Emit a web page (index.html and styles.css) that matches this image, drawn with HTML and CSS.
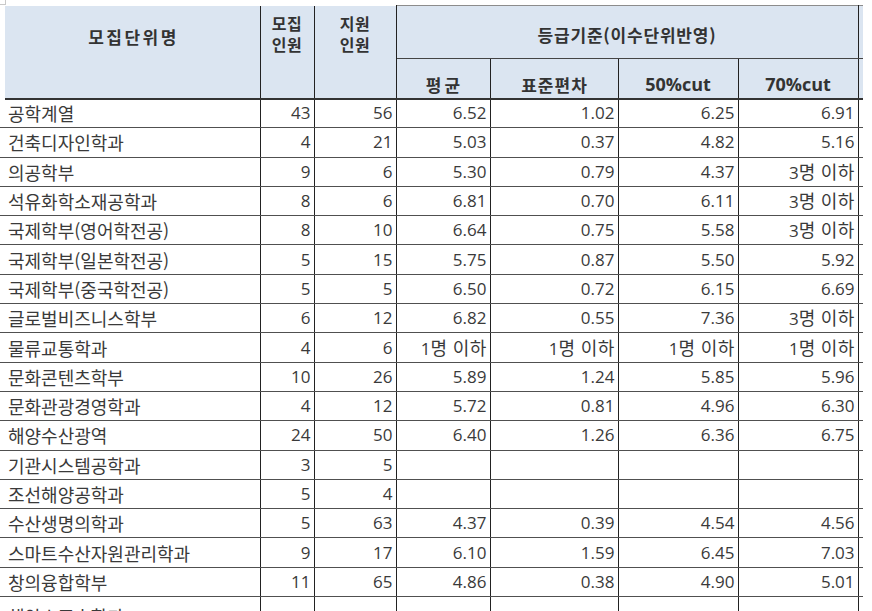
FILE: index.html
```html
<!DOCTYPE html>
<html lang="ko">
<head>
<meta charset="utf-8">
<title>등급기준</title>
<link rel="stylesheet" href="styles.css">
</head>
<body>
<div class="corner"></div>
<table class="grid">
  <colgroup>
    <col class="c-lead"><col class="c-name"><col class="c-quota"><col class="c-apply">
    <col class="c-avg"><col class="c-std"><col class="c-cut"><col class="c-cut"><col class="c-tail">
  </colgroup>
  <thead>
    <tr class="h1">
      <th class="lead" rowspan="2"></th>
      <th class="hname" rowspan="2">모집단위명</th>
      <th class="hsmall vr" rowspan="2"><span class="ln">모집</span><span class="ln">인원</span></th>
      <th class="hsmall vr" rowspan="2"><span class="ln">지원</span><span class="ln">인원</span></th>
      <th class="hgroup vr" colspan="4">등급기준(이수단위반영)</th>
      <th class="htail"></th>
    </tr>
    <tr class="h2">
      <th class="hsub wide vr">평균</th>
      <th class="hsub vr">표준편차</th>
      <th class="hsub lat vr">50%cut</th>
      <th class="hsub lat vr">70%cut</th>
      <th class="htail2"></th>
    </tr>
  </thead>
  <tbody>
    <tr><td class="lead"></td><td class="name vr">공학계열</td><td class="num vr">43</td><td class="num vr">56</td><td class="num vr">6.52</td><td class="num vr">1.02</td><td class="num vr">6.25</td><td class="num vr">6.91</td><td></td></tr>
    <tr><td class="lead"></td><td class="name vr">건축디자인학과</td><td class="num vr">4</td><td class="num vr">21</td><td class="num vr">5.03</td><td class="num vr">0.37</td><td class="num vr">4.82</td><td class="num vr">5.16</td><td></td></tr>
    <tr><td class="lead"></td><td class="name vr">의공학부</td><td class="num vr">9</td><td class="num vr">6</td><td class="num vr">5.30</td><td class="num vr">0.79</td><td class="num vr">4.37</td><td class="num vr">3<span class="ko">명 이하</span></td><td></td></tr>
    <tr><td class="lead"></td><td class="name vr">석유화학소재공학과</td><td class="num vr">8</td><td class="num vr">6</td><td class="num vr">6.81</td><td class="num vr">0.70</td><td class="num vr">6.11</td><td class="num vr">3<span class="ko">명 이하</span></td><td></td></tr>
    <tr><td class="lead"></td><td class="name vr">국제학부(영어학전공)</td><td class="num vr">8</td><td class="num vr">10</td><td class="num vr">6.64</td><td class="num vr">0.75</td><td class="num vr">5.58</td><td class="num vr">3<span class="ko">명 이하</span></td><td></td></tr>
    <tr><td class="lead"></td><td class="name vr">국제학부(일본학전공)</td><td class="num vr">5</td><td class="num vr">15</td><td class="num vr">5.75</td><td class="num vr">0.87</td><td class="num vr">5.50</td><td class="num vr">5.92</td><td></td></tr>
    <tr><td class="lead"></td><td class="name vr">국제학부(중국학전공)</td><td class="num vr">5</td><td class="num vr">5</td><td class="num vr">6.50</td><td class="num vr">0.72</td><td class="num vr">6.15</td><td class="num vr">6.69</td><td></td></tr>
    <tr><td class="lead"></td><td class="name vr">글로벌비즈니스학부</td><td class="num vr">6</td><td class="num vr">12</td><td class="num vr">6.82</td><td class="num vr">0.55</td><td class="num vr">7.36</td><td class="num vr">3<span class="ko">명 이하</span></td><td></td></tr>
    <tr><td class="lead"></td><td class="name vr">물류교통학과</td><td class="num vr">4</td><td class="num vr">6</td><td class="num vr">1<span class="ko">명 이하</span></td><td class="num vr">1<span class="ko">명 이하</span></td><td class="num vr">1<span class="ko">명 이하</span></td><td class="num vr">1<span class="ko">명 이하</span></td><td></td></tr>
    <tr><td class="lead"></td><td class="name vr">문화콘텐츠학부</td><td class="num vr">10</td><td class="num vr">26</td><td class="num vr">5.89</td><td class="num vr">1.24</td><td class="num vr">5.85</td><td class="num vr">5.96</td><td></td></tr>
    <tr><td class="lead"></td><td class="name vr">문화관광경영학과</td><td class="num vr">4</td><td class="num vr">12</td><td class="num vr">5.72</td><td class="num vr">0.81</td><td class="num vr">4.96</td><td class="num vr">6.30</td><td></td></tr>
    <tr><td class="lead"></td><td class="name vr">해양수산광역</td><td class="num vr">24</td><td class="num vr">50</td><td class="num vr">6.40</td><td class="num vr">1.26</td><td class="num vr">6.36</td><td class="num vr">6.75</td><td></td></tr>
    <tr><td class="lead"></td><td class="name vr">기관시스템공학과</td><td class="num vr">3</td><td class="num vr">5</td><td class="num vr"></td><td class="num vr"></td><td class="num vr"></td><td class="num vr"></td><td></td></tr>
    <tr><td class="lead"></td><td class="name vr">조선해양공학과</td><td class="num vr">5</td><td class="num vr">4</td><td class="num vr"></td><td class="num vr"></td><td class="num vr"></td><td class="num vr"></td><td></td></tr>
    <tr><td class="lead"></td><td class="name vr">수산생명의학과</td><td class="num vr">5</td><td class="num vr">63</td><td class="num vr">4.37</td><td class="num vr">0.39</td><td class="num vr">4.54</td><td class="num vr">4.56</td><td></td></tr>
    <tr><td class="lead"></td><td class="name vr">스마트수산자원관리학과</td><td class="num vr">9</td><td class="num vr">17</td><td class="num vr">6.10</td><td class="num vr">1.59</td><td class="num vr">6.45</td><td class="num vr">7.03</td><td></td></tr>
    <tr><td class="lead"></td><td class="name vr">창의융합학부</td><td class="num vr">11</td><td class="num vr">65</td><td class="num vr">4.86</td><td class="num vr">0.38</td><td class="num vr">4.90</td><td class="num vr">5.01</td><td></td></tr>
    <tr class="cut"><td class="lead"></td><td class="name vr">해양스포츠학과</td><td class="num vr"></td><td class="num vr"></td><td class="num vr"></td><td class="num vr"></td><td class="num vr"></td><td class="num vr"></td><td></td></tr>
  </tbody>
</table>
</body>
</html>
```
FILE: styles.css
```css
html, body {
  margin: 0;
  padding: 0;
  background: #ffffff;
  overflow: hidden;
}

body {
  font-family: "Open Sans", "Noto Sans CJK KR", sans-serif;
  color: #333333;
}

.corner {
  width: 5px;
  height: 4px;
  border-right: 1px solid #c9c9c9;
  border-bottom: 1px solid #c9c9c9;
}

.grid {
  border-collapse: collapse;
  table-layout: fixed;
  width: 863px;
}

.c-lead { width: 5px; }
.c-name { width: 255px; }
.c-quota { width: 54px; }
.c-apply { width: 82px; }
.c-avg { width: 94px; }
.c-std { width: 128px; }
.c-cut { width: 120px; }
.c-tail { width: 5px; }

.grid th,
.grid td {
  padding: 0;
  overflow: hidden;
  white-space: nowrap;
}

/* header */
.grid th {
  background: #dbe5f1;
  color: #333333;
  font-family: "Noto Sans CJK KR", sans-serif;
  font-weight: 700;
  font-size: 17px;
  line-height: 21px;
}

.grid th.lead {
  background: #ffffff;
}

.h1 { height: 53px; }
.h2 { height: 40px; }

.hname {
  vertical-align: top;
  padding-top: 20px !important;
  letter-spacing: 2.5px;
  text-indent: 2.5px;
  border-right: 1px solid #222222;
  border-bottom: 2px solid #333333;
}

.hsmall {
  vertical-align: top;
  padding-top: 7px !important;
  letter-spacing: 0.5px;
  border-bottom: 2px solid #333333;
}

.hsmall .ln {
  display: block;
  height: 21px;
  line-height: 21px;
  font-size: 16px;
}

.hgroup {
  vertical-align: middle;
  padding-top: 4px !important;
  letter-spacing: 0.8px;
  border-top: 1px solid #8c8c8c;
  border-bottom: 1px solid #444444;
}

.htail {
  border-top: 1px solid #8c8c8c;
  border-bottom: 1px solid #444444;
}

.htail2 {
  border-bottom: 2px solid #333333;
}

.hsub {
  vertical-align: bottom;
  padding-bottom: 3px !important;
  letter-spacing: 1px;
  text-indent: 1px;
  border-bottom: 2px solid #333333;
}

.hsub.wide {
  letter-spacing: 3px;
  text-indent: 3px;
}

.hsub.lat {
  font-family: "Open Sans", sans-serif;
  font-size: 18px;
  letter-spacing: 0;
  text-indent: 0;
}

.vr {
  border-right: 1px solid #222222;
}

/* body rows */
.grid tbody tr {
  height: 29.3px;
}

.grid td {
  font-size: 17px;
  line-height: 22px;
  color: #3a3a3a;
  vertical-align: middle;
  border-bottom: 1px solid #505050;
}

.grid td.name {
  text-align: left;
  padding-left: 3px;
  font-family: "Noto Sans CJK KR", sans-serif;
  font-size: 18px;
}

.grid td.num {
  text-align: right;
  padding-right: 3px;
}

.grid td .ko {
  font-family: "Noto Sans CJK KR", sans-serif;
  font-size: 18px;
  letter-spacing: 0.3px;
}

.grid tr.cut td.name {
  padding-top: 8px;
}
```
